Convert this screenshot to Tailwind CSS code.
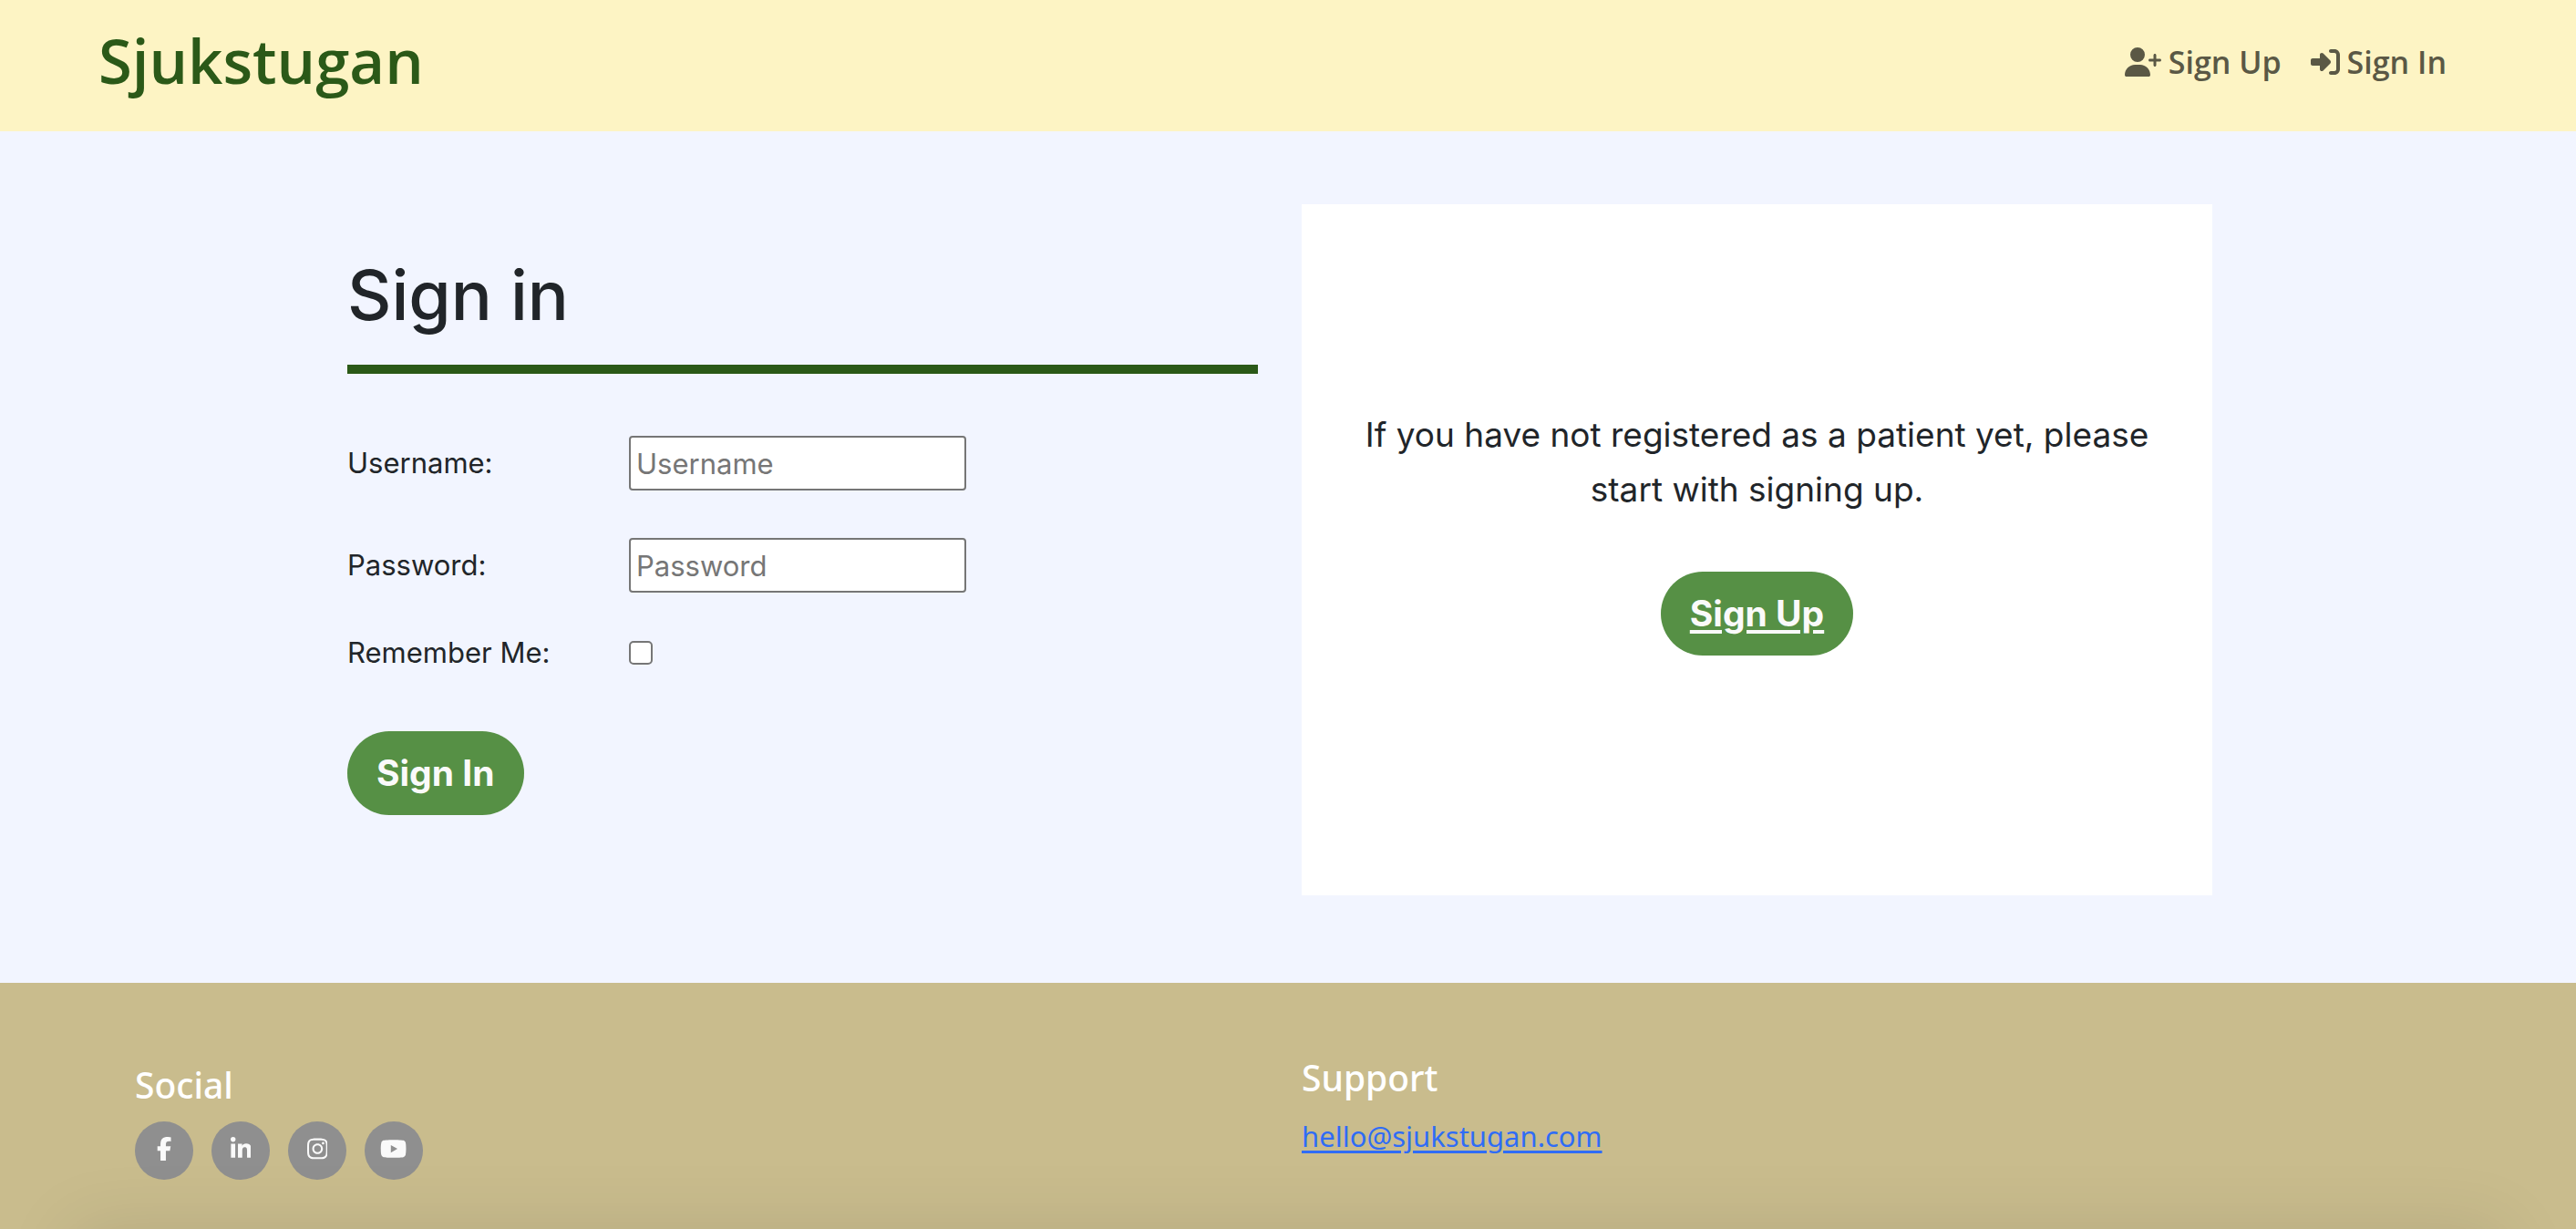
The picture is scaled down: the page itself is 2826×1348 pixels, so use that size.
<!DOCTYPE html>
<html lang="en">
<head>
<meta charset="utf-8">
<meta name="viewport" content="width=device-width, initial-scale=1">
<title>Sjukstugan - Sign in</title>
<script src="https://cdn.jsdelivr.net/npm/@tailwindcss/browser@4"></script>
</head>
<body class="flex min-h-screen flex-col bg-[#f2f5ff] font-['Inter',sans-serif] text-[31px] leading-[48px] text-[#212529]">

<header class="flex h-36 items-center justify-between bg-[#fdf4c4] pr-[142px] pl-[108px] font-['Open_Sans',sans-serif] font-semibold">
  <a href="#" class="pb-3 text-[67px] leading-[80px] text-[#2b5918]">Sjukstugan</a>
  <nav class="flex gap-8 pb-2 text-[34px] text-[#5a5845]">
    <a href="#" class="flex items-center gap-2">
      <svg class="h-8 w-10" viewBox="0 0 640 512" fill="currentColor" aria-hidden="true"><path d="M96 128a128 128 0 1 1 256 0A128 128 0 1 1 96 128zM0 482.3C0 383.8 79.8 304 178.3 304h91.4C368.2 304 448 383.8 448 482.3c0 16.4-13.3 29.7-29.7 29.7H29.7C13.3 512 0 498.7 0 482.3zM504 312V248H440c-13.3 0-24-10.7-24-24s10.700-24 24-24h64V136c0-13.300 10.700-24 24-24s24 10.700 24 24v64h64c13.300 0 24 10.700 24 24s-10.700 24-24 24H552v64c0 13.300-10.700 24-24 24s-24-10.700-24-24z"/></svg>
      Sign Up
    </a>
    <a href="#" class="flex items-center gap-2">
      <svg class="size-8" viewBox="0 0 512 512" fill="currentColor" aria-hidden="true"><path d="M217.900 105.900L340.700 228.700c7.200 7.200 11.300 17.100 11.300 27.300s-4.100 20.100-11.300 27.300L217.900 406.100c-6.400 6.400-15 9.900-24 9.900c-18.700 0-33.900-15.200-33.900-33.900l0-62.100L32 320c-17.700 0-32-14.300-32-32l0-64c0-17.700 14.300-32 32-32l128 0 0-62.100c0-18.700 15.200-33.900 33.900-33.900c9 0 17.600 3.600 24 9.900zM352 416l64 0c17.700 0 32-14.300 32-32l0-256c0-17.700-14.300-32-32-32l-64 0c-17.700 0-32-14.300-32-32s14.300-32 32-32l64 0c53 0 96 43 96 96l0 256c0 53-43 96-96 96l-64 0c-17.700 0-32-14.300-32-32s14.300-32 32-32z"/></svg>
      Sign In
    </a>
  </nav>
</header>

<main class="flex justify-center pt-20 pr-[18px] pb-24">
  <div class="grid w-full max-w-[2046px] grid-cols-2 gap-12">
    <section class="pt-[52px]">
      <h1 class="border-b-10 border-[#2b5918] pb-7 text-[75px] leading-[96px] font-medium">Sign in</h1>
      <form class="pt-[68px]">
        <div class="mb-[52px] flex items-center">
          <label for="username" class="w-[309px]">Username:</label>
          <input id="username" type="text" placeholder="Username" class="h-[60px] w-[370px] rounded-[4px] border-2 border-[#767676] bg-white px-1.5 placeholder:text-[#767676]">
        </div>
        <div class="mb-[42px] flex items-center">
          <label for="password" class="w-[309px]">Password:</label>
          <input id="password" type="password" placeholder="Password" class="h-[60px] w-[370px] rounded-[4px] border-2 border-[#767676] bg-white px-1.5 placeholder:text-[#767676]">
        </div>
        <div class="mb-[62px] flex items-center">
          <label for="remember" class="w-[309px]">Remember Me:</label>
          <input id="remember" type="checkbox" class="size-[26px] appearance-none rounded-[5px] border-2 border-[#767676] bg-white">
        </div>
        <button type="submit" class="h-[92px] rounded-full bg-[#569045] px-8 text-[39px] font-bold text-[#fafafa]">Sign In</button>
      </form>
    </section>
    <section class="flex min-h-[758px] flex-col items-center justify-center bg-white px-16 pb-10 text-center">
      <p class="mb-15 text-[37px] leading-[60px]">If you have not registered as a patient yet, please start with signing up.</p>
      <a href="#" class="flex h-[92px] items-center rounded-full bg-[#569045] px-8 text-[39px] font-bold text-[#fafafa] underline decoration-4 underline-offset-4">Sign Up</a>
    </section>
  </div>
</main>

<footer class="relative grid flex-1 grid-cols-2 items-start overflow-hidden bg-[#c9bc8d] pr-[118px] pb-10 pl-[148px] font-['Noto_Sans',sans-serif]">
  <section class="pt-[88px]">
    <h2 class="mb-4 text-[39px] font-medium text-white">Social</h2>
    <ul class="flex gap-5 text-[#fafafa]">
      <li><a href="#" aria-label="Facebook" class="flex size-16 items-center justify-center rounded-full bg-[#8f8f8f] pb-1"><svg class="h-[26px]" viewBox="0 0 320 512" fill="currentColor"><path d="M80 299.300V512H196V299.300h86.500l18-97.800H196V166.900c0-51.700 20.300-71.500 72.700-71.500c16.300 0 29.400 .4 37 1.200V7.900C291.400 4 256.400 0 236.200 0C129.300 0 80 50.500 80 159.400v42.100H14v97.800H80z"/></svg></a></li>
      <li><a href="#" aria-label="LinkedIn" class="flex size-16 items-center justify-center rounded-full bg-[#8f8f8f] pb-1"><svg class="h-[26px]" viewBox="0 0 448 512" fill="currentColor"><path d="M100.280 448H7.400V148.900h92.880zM53.790 108.100C24.090 108.100 0 83.500 0 53.800a53.790 53.790 0 0 1 107.580 0c0 29.700-24.100 54.300-53.790 54.300zM447.900 448h-92.680V302.400c0-34.700-.7-79.200-48.290-79.200-48.290 0-55.690 37.700-55.690 76.700V448h-92.780V148.900h89.080v40.800h1.300c12.400-23.500 42.690-48.300 87.880-48.300 94 0 111.280 61.900 111.280 142.300V448z"/></svg></a></li>
      <li><a href="#" aria-label="Instagram" class="flex size-16 items-center justify-center rounded-full bg-[#8f8f8f] pb-1"><svg class="h-[26px]" viewBox="0 0 448 512" fill="currentColor"><path d="M224.100 141c-63.600 0-114.900 51.300-114.900 114.900s51.300 114.900 114.900 114.900S339 319.500 339 255.900 287.700 141 224.100 141zm0 189.600c-41.100 0-74.700-33.500-74.700-74.700s33.500-74.700 74.700-74.700 74.700 33.500 74.700 74.700-33.600 74.700-74.700 74.700zm146.400-194.300c0 14.900-12 26.800-26.800 26.800-14.900 0-26.800-12-26.800-26.800s12-26.800 26.800-26.800 26.800 12 26.800 26.800zm76.100 27.200c-1.700-35.900-9.900-67.700-36.200-93.900-26.200-26.200-58-34.400-93.900-36.200-37-2.100-147.900-2.100-184.900 0-35.800 1.700-67.600 9.900-93.900 36.100s-34.400 58-36.200 93.900c-2.100 37-2.100 147.900 0 184.900 1.700 35.900 9.900 67.700 36.200 93.900s58 34.400 93.900 36.200c37 2.100 147.900 2.100 184.900 0 35.900-1.700 67.700-9.900 93.900-36.200 26.200-26.200 34.400-58 36.200-93.900 2.100-37 2.100-147.800 0-184.800zM398.800 388c-7.800 19.600-22.900 34.700-42.600 42.600-29.500 11.700-99.500 9-132.100 9s-102.700 2.600-132.100-9c-19.600-7.800-34.700-22.900-42.600-42.600-11.700-29.500-9-99.500-9-132.100s-2.600-102.700 9-132.100c7.800-19.600 22.900-34.700 42.600-42.600 29.500-11.700 99.500-9 132.100-9s102.700-2.600 132.100 9c19.600 7.800 34.700 22.900 42.600 42.600 11.700 29.500 9 99.500 9 132.100s2.700 102.700-9 132.100z"/></svg></a></li>
      <li><a href="#" aria-label="YouTube" class="flex size-16 items-center justify-center rounded-full bg-[#8f8f8f] pb-1"><svg class="h-[26px]" viewBox="0 0 576 512" fill="currentColor"><path d="M549.655 124.083c-6.281-23.650-24.787-42.276-48.284-48.597C458.781 64 288 64 288 64S117.220 64 74.629 75.486c-23.497 6.322-42.003 24.947-48.284 48.597-11.412 42.867-11.412 132.305-11.412 132.305s0 89.438 11.412 132.305c6.281 23.650 24.787 41.500 48.284 47.821C117.220 448 288 448 288 448s170.780 0 213.371-11.486c23.497-6.321 42.003-24.171 48.284-47.821 11.412-42.867 11.412-132.305 11.412-132.305s0-89.438-11.412-132.305zm-317.510 213.508V175.185l142.739 81.205-142.739 81.201z"/></svg></a></li>
    </ul>
  </section>
  <section class="pt-20">
    <h2 class="mb-4 text-[39px] font-medium text-white">Support</h2>
    <a href="mailto:hello@sjukstugan.com" class="text-[#2f6cf6] underline decoration-3 underline-offset-4">hello@sjukstugan.com</a>
  </section>
  <!-- soft shade along the bottom edge -->
  <div class="pointer-events-none absolute inset-x-20 top-full h-32 shadow-[0_0_80px_rgb(0_0_0/0.1)]"></div>
</footer>

</body>
</html>
